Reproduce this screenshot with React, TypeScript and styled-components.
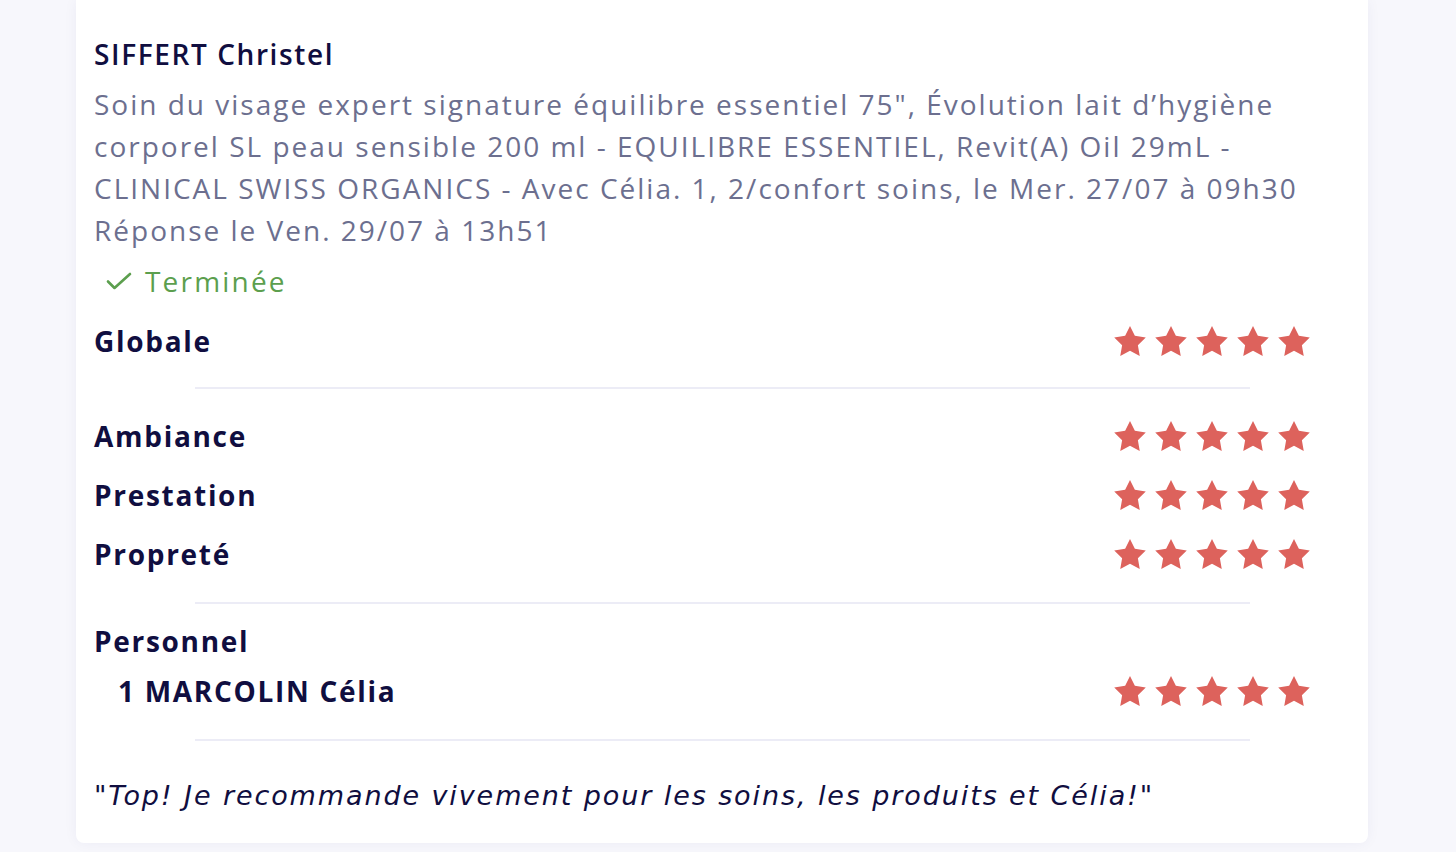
import React from "react";
import styled, { createGlobalStyle } from "styled-components";

const GlobalStyle = createGlobalStyle`
  html, body {
    margin: 0;
    padding: 0;
    background-color: #f7f7fc;
  }
  body {
    font-family: "Open Sans", "Liberation Sans", sans-serif;
    color: #100e40;
  }
`;

const Page = styled.div`
  min-height: 852px;
  padding: 0 88px 9px 76px;
  box-sizing: border-box;
`;

const Card = styled.div`
  background-color: #ffffff;
  border-radius: 0 0 8px 8px;
  box-shadow: 0 0 14px rgba(40, 40, 120, 0.05);
  padding: 36px 18px 28px;
`;

const Title = styled.h2`
  margin: 0;
  font-size: 28px;
  line-height: 36px;
  font-weight: 600;
  letter-spacing: 1.6px;
  color: #100e40;
`;

const Description = styled.p`
  margin: 11px 0 0;
  font-size: 28px;
  line-height: 42px;
  font-weight: 400;
  letter-spacing: 2px;
  color: #6c6f8f;
`;

const Status = styled.div`
  margin-top: 10px;
  height: 40px;
  display: flex;
  align-items: center;
  gap: 13px;
  padding-left: 12px;
  color: #5c9f4e;
  font-size: 28px;
  letter-spacing: 2.2px;
`;

const Row = styled.div<{ $top?: number; $indent?: number }>`
  height: 40px;
  margin-top: ${(p) => p.$top ?? 0}px;
  display: flex;
  align-items: center;
  justify-content: space-between;
  padding-left: ${(p) => p.$indent ?? 0}px;
`;

const Label = styled.span`
  font-size: 28px;
  font-weight: 700;
  letter-spacing: 1.7px;
  color: #100e40;
`;

const Stars = styled.div`
  display: flex;
  gap: 9px;
  padding-right: 40px;
`;

const Divider = styled.hr<{ $top: number; $bottom: number }>`
  border: none;
  height: 2px;
  background-color: #ececf6;
  margin: ${(p) => p.$top}px 100px ${(p) => p.$bottom}px 101px;
`;

const Group = styled.div`
  display: flex;
  flex-direction: column;
  gap: 19px;
`;

const Quote = styled.p`
  margin: 0;
  height: 40px;
  display: flex;
  align-items: center;
  font-family: "DejaVu Sans", "Open Sans", sans-serif;
  font-size: 27px;
  font-style: oblique;
  letter-spacing: 1.9px;
  color: #100e40;
`;

function StarIcon() {
  return (
    <svg width="32" height="30" viewBox="2 2 20 19.02">
      <polygon
        fill="#dd625c"
        points="12,2 15.09,8.26 22,9.27 17,14.14 18.18,21.02 12,17.77 5.82,21.02 7,14.14 2,9.27 8.91,8.26"
      />
    </svg>
  );
}

function Rating({ value = 5 }: { value?: number }) {
  return (
    <Stars>
      {Array.from({ length: value }).map((_, i) => (
        <StarIcon key={i} />
      ))}
    </Stars>
  );
}

function CheckIcon() {
  return (
    <svg width="26" height="20" viewBox="0 0 26 20">
      <path
        d="M2 10.5 L8.5 17 L24 3"
        fill="none"
        stroke="#5c9f4e"
        strokeWidth="2.6"
        strokeLinecap="round"
        strokeLinejoin="round"
      />
    </svg>
  );
}

const criteria = ["Ambiance", "Prestation", "Propreté"];

export default function App() {
  return (
    <Page>
      <GlobalStyle />
      <Card>
        <Title>SIFFERT Christel</Title>
        <Description>
          Soin du visage expert signature équilibre essentiel 75", Évolution lait d’hygiène
          <br />
          corporel SL peau sensible 200 ml - EQUILIBRE ESSENTIEL, Revit(A) Oil 29mL -
          <br />
          CLINICAL SWISS ORGANICS - Avec Célia. 1, 2/confort soins, le Mer. 27/07 à 09h30
          <br />
          Réponse le Ven. 29/07 à 13h51
        </Description>
        <Status>
          <CheckIcon />
          Terminée
        </Status>
        <Row $top={20}>
          <Label>Globale</Label>
          <Rating />
        </Row>
        <Divider $top={26} $bottom={27} />
        <Group>
          {criteria.map((c) => (
            <Row key={c}>
              <Label>{c}</Label>
              <Rating />
            </Row>
          ))}
        </Group>
        <Divider $top={28} $bottom={17} />
        <Row>
          <Label>Personnel</Label>
        </Row>
        <Row $top={10} $indent={24}>
          <Label>1 MARCOLIN Célia</Label>
          <Rating />
        </Row>
        <Divider $top={28} $bottom={34} />
        <Quote>"Top! Je recommande vivement pour les soins, les produits et Célia!"</Quote>
      </Card>
    </Page>
  );
}
